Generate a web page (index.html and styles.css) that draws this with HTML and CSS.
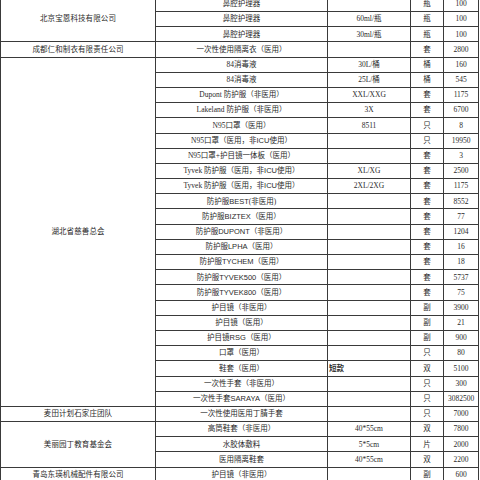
FILE: index.html
```html
<!DOCTYPE html>
<html lang="zh-CN">
<head>
<meta charset="utf-8">
<title>捐赠物资明细</title>
<link rel="stylesheet" href="styles.css">
</head>
<body>
<table class="sheet">
<colgroup>
<col class="c-org"><col class="c-item"><col class="c-spec"><col class="c-unit"><col class="c-qty">
</colgroup>
<tbody>
<tr><td class="org" rowspan="3">北京宝恩科技有限公司</td><td class="item">鼻腔护理器</td><td class="spec"></td><td class="unit">瓶</td><td class="qty">100</td></tr>
<tr><td class="item">鼻腔护理器</td><td class="spec">60ml/瓶</td><td class="unit">瓶</td><td class="qty">100</td></tr>
<tr><td class="item">鼻腔护理器</td><td class="spec">30ml/瓶</td><td class="unit">瓶</td><td class="qty">100</td></tr>
<tr><td class="org">成都仁和制衣有限责任公司</td><td class="item">一次性使用隔离衣（医用）</td><td class="spec"></td><td class="unit">套</td><td class="qty">2800</td></tr>
<tr><td class="org" rowspan="23">湖北省慈善总会</td><td class="item">84消毒液</td><td class="spec">30L/桶</td><td class="unit">桶</td><td class="qty">160</td></tr>
<tr><td class="item">84消毒液</td><td class="spec">25L/桶</td><td class="unit">桶</td><td class="qty">545</td></tr>
<tr><td class="item">Dupont 防护服（非医用）</td><td class="spec">XXL/XXG</td><td class="unit">套</td><td class="qty">1175</td></tr>
<tr><td class="item">Lakeland 防护服（非医用）</td><td class="spec">3X</td><td class="unit">套</td><td class="qty">6700</td></tr>
<tr><td class="item">N95口罩（医用）</td><td class="spec">8511</td><td class="unit">只</td><td class="qty">8</td></tr>
<tr><td class="item">N95口罩（医用，非<span class="sans">ICU</span>使用）</td><td class="spec"></td><td class="unit">只</td><td class="qty">19950</td></tr>
<tr><td class="item">N95口罩+护目镜一体板（医用）</td><td class="spec"></td><td class="unit">套</td><td class="qty">3</td></tr>
<tr><td class="item">Tyvek 防护服（医用，非<span class="sans">ICU</span>使用）</td><td class="spec">XL/XG</td><td class="unit">套</td><td class="qty">2500</td></tr>
<tr><td class="item">Tyvek 防护服（医用，非<span class="sans">ICU</span>使用）</td><td class="spec">2XL/2XG</td><td class="unit">套</td><td class="qty">1175</td></tr>
<tr><td class="item">防护服<span class="sans">BEST</span>(非医用)</td><td class="spec"></td><td class="unit">套</td><td class="qty">8552</td></tr>
<tr><td class="item">防护服<span class="sans">BIZTEX</span>（医用）</td><td class="spec"></td><td class="unit">套</td><td class="qty">77</td></tr>
<tr><td class="item">防护服<span class="sans">DUPONT</span>（非医用）</td><td class="spec"></td><td class="unit">套</td><td class="qty">1204</td></tr>
<tr><td class="item">防护服<span class="sans">LPHA</span>（医用）</td><td class="spec"></td><td class="unit">套</td><td class="qty">16</td></tr>
<tr><td class="item">防护服<span class="sans">TYCHEM</span>（医用）</td><td class="spec"></td><td class="unit">套</td><td class="qty">18</td></tr>
<tr><td class="item">防护服<span class="sans">TYVEK500</span>（医用）</td><td class="spec"></td><td class="unit">套</td><td class="qty">5737</td></tr>
<tr><td class="item">防护服<span class="sans">TYVEK800</span>（医用）</td><td class="spec"></td><td class="unit">套</td><td class="qty">75</td></tr>
<tr><td class="item">护目镜（非医用）</td><td class="spec"></td><td class="unit">副</td><td class="qty">3900</td></tr>
<tr><td class="item">护目镜（医用）</td><td class="spec"></td><td class="unit">副</td><td class="qty">21</td></tr>
<tr><td class="item">护目镜<span class="sans">RSG</span>（医用）</td><td class="spec"></td><td class="unit">副</td><td class="qty">900</td></tr>
<tr><td class="item">口罩（医用）</td><td class="spec"></td><td class="unit">只</td><td class="qty">80</td></tr>
<tr><td class="item">鞋套（医用）</td><td class="spec spec-left"><span class="sans strong">短款</span></td><td class="unit">双</td><td class="qty">5100</td></tr>
<tr><td class="item">一次性手套（非医用）</td><td class="spec"></td><td class="unit">只</td><td class="qty">300</td></tr>
<tr><td class="item">一次性手套<span class="sans">SARAYA</span>（医用）</td><td class="spec"></td><td class="unit">只</td><td class="qty">3082500</td></tr>
<tr><td class="org">麦田计划石家庄团队</td><td class="item">一次性使用医用丁腈手套</td><td class="spec"></td><td class="unit">只</td><td class="qty">7000</td></tr>
<tr><td class="org" rowspan="3">美丽园丁教育基金会</td><td class="item">高筒鞋套（非医用）</td><td class="spec">40*55cm</td><td class="unit">双</td><td class="qty">7800</td></tr>
<tr><td class="item">水胶体敷料</td><td class="spec">5*5cm</td><td class="unit">片</td><td class="qty">2000</td></tr>
<tr><td class="item">医用隔离鞋套</td><td class="spec">40*55cm</td><td class="unit">双</td><td class="qty">2200</td></tr>
<tr><td class="org">青岛东瑛机械配件有限公司</td><td class="item">护目镜（非医用）</td><td class="spec"></td><td class="unit">副</td><td class="qty">600</td></tr>
</tbody>
</table>
</body>
</html>
```
FILE: styles.css
```css
html, body {
  margin: 0;
  padding: 0;
  background: #ffffff;
}

body {
  font-family: "Liberation Serif", "Noto Sans CJK SC", serif;
  font-size: 7.5px;
  color: #2a2a2a;
}

.sheet {
  border-collapse: collapse;
  table-layout: fixed;
  width: 478px;
  margin-top: -4.2px;
}

.c-org { width: 155px; }
.c-item { width: 172px; }
.c-spec { width: 83px; }
.c-unit { width: 33px; }
.c-qty { width: 35px; }

.sheet tr {
  height: 15.19px;
}

.sheet td {
  border: 1px solid #3a3a3a;
  padding: 0;
  line-height: 1;
  text-align: center;
  vertical-align: middle;
  white-space: nowrap;
  overflow: hidden;
}

.sheet td.org {
  letter-spacing: 0.1px;
}

.sheet td.spec-left {
  text-align: left;
  padding-left: 1px;
}

.sans {
  font-family: "Liberation Sans", "Noto Sans CJK SC", sans-serif;
}

.strong {
  font-weight: bold;
}
```
